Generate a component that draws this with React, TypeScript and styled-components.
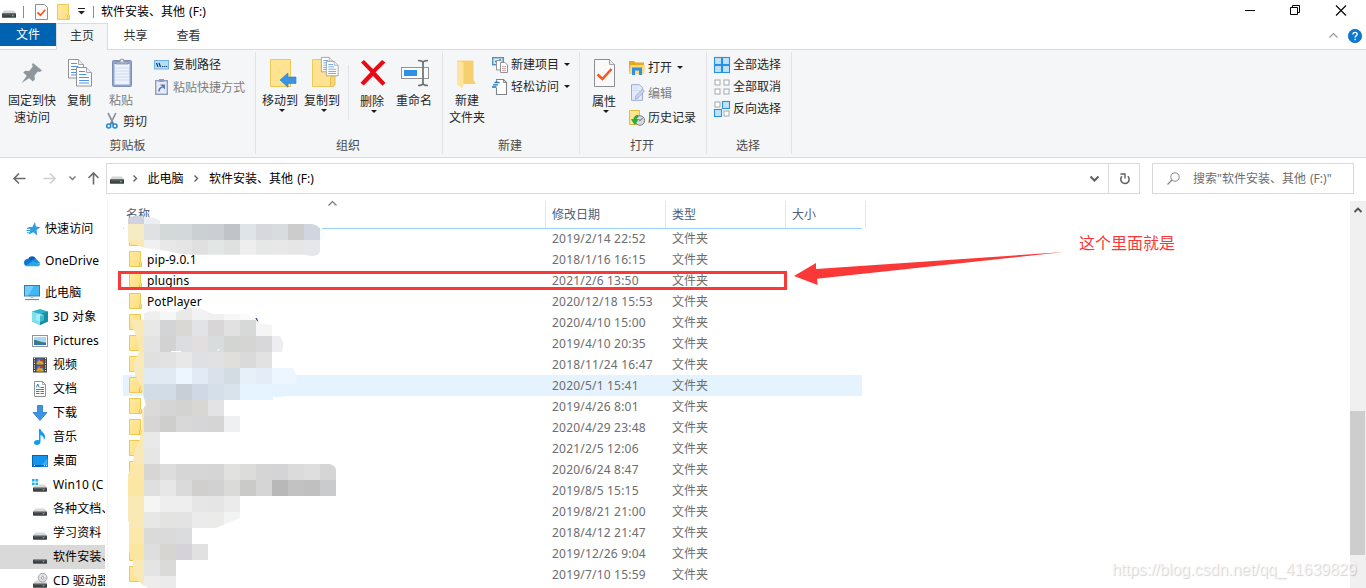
import React from 'react';
import styled, { createGlobalStyle } from 'styled-components';

const GlobalStyle = createGlobalStyle`
  * { box-sizing: border-box; }
  html, body { margin: 0; padding: 0; background: #fff; overflow: hidden; }
  body {
    font-family: "Noto Sans", "Noto Sans CJK SC", sans-serif;
    font-size: 12px;
    line-height: 17px;
    color: #000;
  }
  svg { display: block; flex: none; overflow: visible; }
`;

const Window = styled.div`
  position: relative;
  display: flex;
  flex-direction: column;
  width: 1366px;
  height: 588px;
  overflow: hidden;
  background: #fff;
`;

/* ---------- title bar ---------- */

const TitleBar = styled.header`
  display: flex;
  align-items: center;
  height: 23px;
  padding-left: 2px;
`;

const BarSeparator = styled.span<{ $left: number; $right: number }>`
  width: 1px;
  height: 12px;
  margin: 0 ${p => p.$right}px 0 ${p => p.$left}px;
  background: #8c8c8c;
`;

const IconSlot = styled.span<{ $gap: number }>`
  margin-right: ${p => p.$gap}px;
`;

const TitleText = styled.h1`
  flex: 1;
  margin: 0;
  font-size: 12px;
  font-weight: 400;
  line-height: 17px;
  word-spacing: 1px;
`;

const WindowControls = styled.div`
  display: flex;
  align-items: center;
  gap: 35px;
  padding: 0 20px 3px 0;
`;

/* ---------- tabs ---------- */

const TabRow = styled.nav`
  display: flex;
  height: 27px;
  margin-bottom: -1px;
  position: relative;
`;

const FileTab = styled.div`
  width: 56px;
  height: 23px;
  line-height: 23px;
  text-align: center;
  color: #fff;
  background: #0063b1;
`;

const Tab = styled.div<{ $active?: boolean }>`
  width: ${p => (p.$active ? 52 : 53)}px;
  height: 27px;
  padding-left: ${p => (p.$active ? 0 : 2)}px;
  line-height: 24px;
  text-align: center;
  color: #333;
  border: 1px solid ${p => (p.$active ? '#dadbdc' : 'transparent')};
  border-bottom: 0;
  background: ${p => (p.$active ? '#f5f6f7' : 'transparent')};
`;

const TabTools = styled.div`
  display: flex;
  align-items: center;
  gap: 10px;
  margin-left: auto;
  padding: 0 4px 1px 0;
`;

/* ---------- ribbon ---------- */

const Ribbon = styled.section`
  display: flex;
  height: 109px;
  border-top: 1px solid #dadbdc;
  border-bottom: 1px solid #dadbdc;
  background: #f5f6f7;
`;

const Group = styled.div<{ $width: number }>`
  display: flex;
  flex-direction: column;
  width: ${p => p.$width}px;
`;

const GroupBody = styled.div<{ $pad: number }>`
  display: flex;
  align-items: flex-start;
  height: 85px;
  padding-left: ${p => p.$pad}px;
`;

const GroupLabel = styled.div<{ $right?: number }>`
  padding-right: ${p => p.$right ?? 2}px;
  line-height: 21px;
  text-align: center;
  color: #4a4a4a;
`;

const GroupDivider = styled.div`
  width: 1px;
  margin: 2px 0 3px;
  background: #e2e3e4;
`;

const InnerDivider = styled.div`
  width: 1px;
  height: 55px;
  margin: 15px 2px 0 5px;
  background: #e2e3e4;
`;

const BigButton = styled.div<{ $width?: number; $left?: number; $muted?: boolean }>`
  display: flex;
  flex-direction: column;
  align-items: center;
  width: ${p => p.$width ?? 42}px;
  margin: 6px 0 0 ${p => p.$left ?? 0}px;
  color: ${p => (p.$muted ? '#7d7d7d' : '#262626')};
  white-space: nowrap;
  text-align: center;
`;

const BigLabel = styled.span<{ $top?: number }>`
  margin-top: ${p => p.$top ?? 4}px;
`;

const Stack = styled.div<{ $left?: number; $top?: number }>`
  display: flex;
  flex-direction: column;
  margin: ${p => p.$top ?? 4}px 0 0 ${p => p.$left ?? 0}px;
`;

const PasteColumn = styled.div`
  display: flex;
  flex-direction: column;
  width: 42px;
  margin-left: 9px;
`;

const SmallButton = styled.div<{ $muted?: boolean; $height?: number; $gap?: number }>`
  display: flex;
  align-items: center;
  gap: ${p => p.$gap ?? 3}px;
  height: ${p => p.$height ?? 22}px;
  white-space: nowrap;
  color: ${p => (p.$muted ? '#7d7d7d' : '#262626')};
`;

const SmallLabel = styled.span<{ $top?: number }>`
  margin-top: ${p => p.$top ?? -2}px;
`;

const CaretSlot = styled.span<{ $left?: number; $top?: number }>`
  margin: ${p => p.$top ?? 0}px 0 0 ${p => p.$left ?? 0}px;
`;

/* ---------- address row ---------- */

const AddressRow = styled.div`
  display: flex;
  align-items: flex-start;
  height: 43px;
  padding-top: 5px;
  word-spacing: 1px;
`;

const NavButtons = styled.div`
  display: flex;
  align-items: center;
  width: 106px;
  height: 31px;
  padding-left: 13px;
`;

const AddressBox = styled.div`
  display: flex;
  width: 1034px;
  height: 31px;
  border: 1px solid #d9d9d9;
`;

const Crumbs = styled.div`
  display: flex;
  align-items: center;
  flex: 1;
  padding: 0 0 1px 3px;
`;

const Crumb = styled.span<{ $left: number; $right: number }>`
  margin: 0 ${p => p.$right}px 0 ${p => p.$left}px;
`;

const CrumbToggle = styled.span`
  margin: 1px 9px 0 auto;
`;

const Refresh = styled.div`
  display: flex;
  align-items: center;
  justify-content: center;
  width: 31px;
  padding-left: 2px;
  border-left: 1px solid #d9d9d9;
`;

const SearchBox = styled.div`
  display: flex;
  align-items: center;
  gap: 13px;
  width: 202px;
  height: 31px;
  margin-left: 12px;
  padding: 0 0 1px 14px;
  border: 1px solid #d9d9d9;
  color: #6d6d6d;
  white-space: nowrap;
`;

/* ---------- body ---------- */

const Body = styled.main`
  display: flex;
  height: 387px;
`;

const Sidebar = styled.aside`
  width: 108px;
  height: 387px;
  padding-top: 16px;
  overflow: hidden;
  border-right: 1px solid #f2f2f2;
`;

const NavItem = styled.div<{ $level: number; $spaced?: boolean; $selected?: boolean }>`
  display: flex;
  align-items: center;
  gap: 5px;
  width: 105px;
  height: 24px;
  margin-bottom: ${p => (p.$spaced ? 8 : 0)}px;
  padding-left: ${p => (p.$level ? 32 : 24)}px;
  overflow: hidden;
  white-space: nowrap;
  background: ${p => (p.$selected ? '#d9d9d9' : 'transparent')};
`;

const NavLabel = styled.span`
  margin-top: -2px;
  letter-spacing: 0.1px;
`;

const FileList = styled.section`
  width: 1242px;
  padding-left: 15px;
`;

const columns = '423px 120px 120px 80px';

const HeaderRow = styled.div`
  position: relative;
  display: grid;
  grid-template-columns: ${columns};
  width: 743px;
  height: 27px;
  color: #4c607a;
`;

const HeaderCell = styled.div<{ $first?: boolean }>`
  position: relative;
  padding-left: ${p => (p.$first ? 3 : 6)}px;
  line-height: 27px;
  border-right: 1px solid #e5e5e5;
`;

const SortMark = styled.span`
  position: absolute;
  left: 205px;
  top: 0;
`;

const Rows = styled.div`
  width: 739px;
  box-shadow: inset 0 1px #99d1ff;
`;

const Row = styled.div<{ $hover?: boolean }>`
  display: grid;
  grid-template-columns: ${columns};
  align-items: center;
  height: 21px;
  background: ${p => (p.$hover ? '#e5f3ff' : 'transparent')};
  color: #6d6d6d;
`;

const NameCell = styled.div`
  display: flex;
  align-items: center;
  gap: 5px;
  height: 21px;
  padding: 0 0 1px 6px;
  color: #000;
`;

const NameText = styled.span<{ $indent?: number }>`
  margin-left: ${p => p.$indent ?? 0}px;
  letter-spacing: 0.1px;
`;

const DateCell = styled.div`
  padding-left: 6px;
  letter-spacing: 0.2px;
`;

const TypeCell = styled.div`
  padding-left: 6px;
`;

const ScrollTrack = styled.div`
  display: flex;
  flex-direction: column;
  align-items: center;
  width: 16px;
  padding: 7px 1px 0 0;
  background: #f0f0f0;
`;

const ScrollThumb = styled.div`
  width: 15px;
  height: 144px;
  margin-top: 198px;
  background: #cdcdcd;
`;

/* ---------- overlays ---------- */

const Overlay = styled.svg`
  position: absolute;
  left: 0;
  top: 0;
  pointer-events: none;
`;

const Frame = styled.div`
  position: absolute;
  left: 118px;
  top: 271px;
  width: 669px;
  height: 19px;
  border: 3px solid #fb3838;
`;

const Note = styled.div`
  position: absolute;
  left: 1079px;
  top: 232px;
  font-size: 16px;
  line-height: 23px;
  color: #fb3838;
  white-space: nowrap;
`;

const Watermark = styled.div`
  position: absolute;
  left: 1112px;
  top: 560px;
  font-family: "Liberation Sans", sans-serif;
  font-size: 16px;
  line-height: 20px;
  letter-spacing: -0.03px;
  color: rgba(250, 250, 250, 0.75);
  text-shadow: 1px 1px 1px rgba(0, 0, 0, 0.18);
  white-space: nowrap;
`;

/* ---------- icons ---------- */

const DownCaret = ({ shift = 0 }: { shift?: number }) => (
  <svg width="6" height="3" viewBox="0 0 6 3"><path d="M0 0h6L3 3z" transform={`translate(${shift} 0)`} fill="#1a1a1a" /></svg>
);

const Drive = () => (
  <svg width="14" height="8" viewBox="0 0 14 8">
    <path d="M2 0.5h10l2 3H0z" fill="#d4d6d8" />
    <rect y="3.3" width="14" height="4.5" rx="0.5" fill="#3d4144" />
    <rect x="1" y="4.2" width="12" height="1" fill="#5c6063" />
    <circle cx="10.8" cy="5.6" r="0.9" fill="#33e04b" />
  </svg>
);

const NavDrive = ({ badge }: { badge?: 'windows' | 'disc' }) => (
  <svg width="16" height="16" viewBox="0 0 16 16">
    {badge === 'windows' && (
      <g fill="#1fb4f0">
        <rect y="2" width="2.6" height="2.600" /><rect x="3.400" y="2" width="2.800" height="2.600" />
        <rect y="5.600" width="2.600" height="2.600" /><rect x="3.400" y="5.600" width="2.800" height="2.600" />
      </g>
    )}
    <path d={badge === 'windows' ? 'M7 7.600h5.600l2.400 3H1l1-1.500h5z' : 'M3.400 7.600h9.200l2.400 3H1z'} fill="#d6d8da" />
    <rect x="1" y="10.500" width="14" height="4.200" rx="0.400" fill="#3d4144" />
    <rect x="2" y="11.200" width="12" height="0.900" fill="#62666a" />
    <circle cx="11.400" cy="12.800" r="0.800" fill="#38e050" />
    {badge === 'disc' && (
      <g>
        <circle cx="10.600" cy="4.700" r="4.400" fill="#dcdfe1" stroke="#909599" strokeWidth="0.800" />
        <path d="M7.500 2.200l3 2.500 3.600-2" stroke="#fff" fill="none" />
        <circle cx="10.600" cy="4.700" r="1.300" fill="#fff" stroke="#7d8285" strokeWidth="0.700" />
      </g>
    )}
  </svg>
);

const Folder = () => (
  <svg width="13" height="16" viewBox="0 0 13 16">
    <defs>
      <linearGradient id="folderFill" x1="0" y1="0" x2="1" y2="1">
        <stop offset="0" stopColor="#ffeaa0" /><stop offset="1" stopColor="#ffdf80" />
      </linearGradient>
    </defs>
    <path d="M0.5 0.5h11v15H0.5z" fill="url(#folderFill)" stroke="#eec950" />
    <path d="M10.5 15.5v-4l1-1 1 1v4z" fill="#ffe07e" stroke="#e2bb3e" strokeWidth="0.8" />
  </svg>
);

const CheckedPage = ({ big }: { big?: boolean }) => big ? (
  <svg width="32" height="32" viewBox="0 0 32 32">
    <path d="M6.5 3.5h15l5 5v22h-20z" fill="#fafafa" stroke="#8b8f93" />
    <path d="M21.5 3.5v5h5" fill="#e9eaeb" stroke="#8b8f93" strokeWidth="0.8" />
    <path d="M9.5 18.500l5 4.500 9-10" fill="none" stroke="#f4591d" strokeWidth="2.6" />
  </svg>
) : (
  <svg width="13" height="16" viewBox="0 0 13 16">
    <path d="M0.5 0.5h9l3 3v12h-12z" fill="#fafafa" stroke="#8b8f93" />
    <path d="M2.5 8.5l3 2.7 4.8-5.4" fill="none" stroke="#f4591d" strokeWidth="1.7" />
  </svg>
);

const Pin = () => (
  <svg width="32" height="32" viewBox="0 0 32 32">
    <g fill="#8e979d">
      <path d="M17 7l9 7.5-2.2 1.4-2-.5-3.200 4 .2 4-2 2-9.600-9 2-1.600 4 .2 3.600-4.400-.8-2z" />
      <path d="M11.600 18.600l3 2.600L5.600 27z" />
    </g>
  </svg>
);

const PageLines = ({ x, y, scale = 1 }: { x: number; y: number; scale?: number }) => (
  <g transform={`translate(${x} ${y}) scale(${scale})`}>
    <path d="M0.5 0.5h10l5 5v13.500h-15z" fill="#fff" stroke="#8f9498" />
    <path d="M10.500 0.500v5h5" fill="#eceff2" stroke="#8f9498" strokeWidth="0.8" />
    <path d="M3 4.500h6M3 7.500h7.500M3 10.500h10M3 13.500h10M3 16h10" stroke="#4f93e6" />
  </g>
);

const CopyPages = () => (
  <svg width="32" height="32" viewBox="0 0 32 32">
    <PageLines x={5} y={3} /><PageLines x={13} y={11} />
  </svg>
);

const Clipboard = () => (
  <svg width="32" height="32" viewBox="0 0 32 32">
    <rect x="7.500" y="4.500" width="19" height="26" rx="1" fill="#8fa3cb" stroke="#7d90ba" />
    <rect x="9.500" y="8" width="15" height="20.500" fill="#eef3fb" />
    <path d="M10 12h14M10 15h14M10 18h14M10 21h14M10 24h14" stroke="#cfdaee" />
    <path d="M11 8V5.500h3.500a2.500 2.500 0 0 1 5 0H23V8z" fill="#a9b2c2" stroke="#808ba1" strokeWidth="0.7" />
    <circle cx="17" cy="4.800" r="1" fill="#fff" />
  </svg>
);

const Scissors = () => (
  <svg width="12" height="18" viewBox="0 0 12 18">
    <path d="M2 1l5.500 11M9.800 1L4.500 12" stroke="#8b949a" strokeWidth="1.700" fill="none" />
    <circle cx="2.700" cy="14" r="2" fill="none" stroke="#2689d0" strokeWidth="1.600" />
    <circle cx="9" cy="14" r="2" fill="none" stroke="#2689d0" strokeWidth="1.600" />
    <path d="M4.300 12.500L6 10.500l1.600 2" stroke="#2689d0" strokeWidth="1.400" fill="none" />
  </svg>
);

const PathIcon = () => (
  <svg width="16" height="10" viewBox="0 0 16 10">
    <rect x="0.500" y="0.500" width="14" height="8.500" fill="#b5dcf8" stroke="#71b2e6" />
    <path d="M2.500 3l1.500 4M5 3l1.500 4" stroke="#143a66" strokeWidth="1.200" />
    <path d="M8 6.500h1.200M10 6.500h1.200M12 6.500h1.200" stroke="#143a66" strokeWidth="1.200" />
  </svg>
);

const ShortcutIcon = () => (
  <svg width="16" height="16" viewBox="0 0 16 16">
    <rect x="1.700" y="1.700" width="11.600" height="13.600" fill="#e7ebf7" stroke="#8f9dc0" strokeWidth="1.400" />
    <rect x="5" y="0" width="5" height="3" fill="#8f9dc0" />
    <path d="M5 12.500c0-3 1-4 3.500-4.500" stroke="#5f77b0" strokeWidth="1.600" fill="none" />
    <path d="M6 5.500h5v5z" fill="#5f77b0" />
  </svg>
);

const BigFolderBase = ({ w = 21 }: { w?: number }) => (
  <path d={`M6.500 3.500h${w - 1}v27h-${w - 1}z`} fill="#ffe391" stroke="#edc95a" />
);

const MoveTo = () => (
  <svg width="32" height="32" viewBox="0 0 32 32">
    <BigFolderBase />
    <path d="M16 24l8-7v4h8v6.500h-8v3.800z" fill="#3a93e3" stroke="#2a7fcc" strokeWidth="0.600" />
  </svg>
);

const CopyTo = () => (
  <svg width="32" height="32" viewBox="0 0 32 32">
    <BigFolderBase w={20} />
    <path d="M24.500 30.500v-9l2-2h2.500v9l-1.500 2z" fill="#f9d672" stroke="#e3bd4b" strokeWidth="0.900" />
    <PageLines x={15} y={1} scale={0.78} /><PageLines x={20} y={5} scale={0.78} />
  </svg>
);

const DeleteCross = () => (
  <svg width="32" height="32" viewBox="0 0 32 32">
    <path d="M5 6.500L8 4 17 12.900 26 4 29.500 6.500 19.600 16.300 29.500 27l-3 2.800L17 20 7.800 29.500 4.500 26.800 14.400 16.300z" fill="#e60b14" />
  </svg>
);

const Rename = () => (
  <svg width="32" height="32" viewBox="0 0 32 32">
    <rect x="3.500" y="11.500" width="27" height="11" fill="#fdfdfd" stroke="#8f9498" />
    <rect x="6" y="14" width="13" height="6" fill="#2f91e5" />
    <path d="M20 4.500c3 0 5 .5 5 2.500v20c0 2-2 2.500-5 2.500M30 4.500c-3 0-5 .5-5 2.500v20c0 2 2 2.500 5 2.500" fill="none" stroke="#6b6f73" strokeWidth="1.700" />
  </svg>
);

const NewFolder = () => (
  <svg width="32" height="32" viewBox="0 0 32 32">
    <path d="M10 5h12.500v19l2.500 4H10z" fill="#f6d06e" />
    <path d="M6 5h4l2.500 2.500V27l-1.500 5L6 28.500z" fill="#fde5a0" />
    <path d="M6 5h16.500" stroke="#f2cd6c" strokeWidth="0.800" />
    <path d="M11 31.500l1.500-4V8" fill="none" stroke="#f6d985" strokeWidth="0.700" />
  </svg>
);

const NewItem = () => (
  <svg width="16" height="16" viewBox="0 0 16 16">
    <rect x="0.700" y="0.700" width="10.600" height="7" fill="#d6ecfb" stroke="#4f93c0" strokeWidth="1.400" />
    <path d="M3 4.500h2M7 3h2" stroke="#3a7cab" strokeWidth="1.500" />
    <path d="M4.500 3.500h4.500l2.500 2.500v7h-7z" fill="#fff" stroke="#8f9498" />
    <path d="M8.500 5.500h4.500l2.500 2.500v7.500h-7z" fill="#fff" stroke="#8f9498" />
    <path d="M10 9.500h4M10 11.500h4M10 13.500h4" stroke="#e79a9a" strokeWidth="0.900" />
  </svg>
);

const EasyAccess = () => (
  <svg width="16" height="16" viewBox="0 0 16 16">
    <path d="M4.500 3V0.500h7l3 3v12h-10V9" fill="#fff" stroke="#7f8488" strokeWidth="1.100" />
    <path d="M11.500 0.500v3h3" fill="none" stroke="#7f8488" strokeWidth="0.900" />
    <path d="M2.500 3.500h5M1 5.800h5M0 8h4.500" stroke="#2377bd" strokeWidth="1.300" />
  </svg>
);

const OpenFolder = () => (
  <svg width="16" height="16" viewBox="0 0 16 16">
    <path d="M0 1h5l1.500 1.500H15V14H0z" fill="#e7a91c" />
    <path d="M0 14L1.500 5H16l-1 9z" fill="#ffd978" />
    <path d="M3 15V7.500h10V15h-3v-4.500H6V15z" fill="#2f8fe0" />
  </svg>
);

const EditPage = () => (
  <svg width="16" height="17" viewBox="0 0 16 17">
    <path d="M2.500 0.700h8l3 3v12.600h-11z" fill="#e3ebf9" stroke="#98acd2" />
    <path d="M4 4h5M4 6.500h7" stroke="#ccd8ef" strokeWidth="0.900" />
    <path d="M6 15l1-3.200L13.500 5l2 2-6.500 7z" fill="#c6d4ee" stroke="#8ba3cf" strokeWidth="0.700" />
  </svg>
);

const History = () => (
  <svg width="16" height="16" viewBox="0 0 16 16">
    <path d="M0.500 0.500h10v14h-10z" fill="#ffe58c" stroke="#e2bb43" />
    <circle cx="10.800" cy="10.500" r="4.800" fill="#d7dadc" stroke="#7b8084" />
    <path d="M9.500 9l1.300 1.700 2.800-2.500" stroke="#555" fill="none" strokeWidth="0.900" />
    <path d="M9 5.300c-2.500-.1-4 1.600-4.200 4.200H2.500l3.300 5 3.200-5H7.200c0-1.500.5-2.300 1.800-2.300z" fill="#27b43a" stroke="#128023" strokeWidth="0.500" />
  </svg>
);

const Tiles = ({ on }: { on: boolean[] }) => (
  <svg width="16" height="16" viewBox="0 0 16 16">
    {on.map((active, i) => {
      const step = active ? 8 : 9;
      const pad = active ? 0.5 : 1;
      const size = active ? 7 : 5;
      return (
        <rect key={i} x={(i % 2) * step + pad} y={Math.floor(i / 2) * step + pad}
          width={size} height={size}
          fill={active ? '#bfe2fa' : '#fff'} stroke={active ? '#2c92df' : '#a3a6a9'} strokeWidth={active ? 1.1 : 1} />
      );
    })}
  </svg>
);

const Star = () => (
  <svg width="16" height="16" viewBox="0 0 16 16">
    <path d="M10.500 1l.9 4.500 4.600.8-4 2.600.8 5.600-4-3.200-4.800 2.200 2-4.500L3.500 6h4.300z" transform="translate(0.500 0)" fill="#2f9de4" />
    <path d="M3 7.300h3M2.500 9.500h4M3 11.800h2.500" stroke="#2f9de4" strokeWidth="1" />
  </svg>
);

const OneDriveIcon = () => (
  <svg width="16" height="16" viewBox="0 0 16 16">
    <path d="M4 6.200a4.200 4.200 0 0 1 7.800-.4L8 10z" fill="#0a5cb4" />
    <path d="M3.500 5.800C1.500 6 0 7.600 0 9.700S1.600 13.300 3.500 13.300L11 9z" fill="#1173d2" />
    <path d="M11 5.800a3.600 3.600 0 0 1 3.300 2.400C15.500 8.700 16 9.600 16 10.800L9 9.500 7 7.600z" fill="#1490df" />
    <path d="M1.500 12.800L8.300 8.600 16 11c-.1 1.400-1.200 2.300-2.600 2.300H3.500c-.8 0-1.400-.1-2-.5z" fill="#28a8ea" />
  </svg>
);

const Computer = () => (
  <svg width="16" height="16" viewBox="0 0 16 16">
    <rect x="0.500" y="0.500" width="15" height="10.500" fill="#41b8f5" stroke="#3a7aa6" />
    <path d="M1 1h9L4 10.500H1z" fill="#74cdf9" />
    <path d="M6.500 11.500h3v1.500h-3z" fill="#b8c0c6" />
    <path d="M1 14.500h14" stroke="#7d8b95" strokeWidth="1.200" />
  </svg>
);

const Cube = () => (
  <svg width="16" height="16" viewBox="0 0 16 16">
    <path d="M0 2.500L8 0l8 2.500v10L8 16l-8-3.500z" fill="#2bb3cb" />
    <path d="M0 2.500L8 5v11l-8-3.500z" fill="#7fe0ec" />
    <path d="M8 5l8-2.500v10L8 16z" fill="#148fa8" />
    <path d="M4 6l4-1.500L12 6v5l-4 1.800L4 11z" fill="#b9f1f7" opacity="0.700" />
    <path d="M8 7.500L12 6v5l-4 1.800z" fill="#35bccf" />
  </svg>
);

const Picture = () => (
  <svg width="16" height="16" viewBox="0 0 16 16">
    <rect x="0.500" y="2.500" width="15" height="11" fill="#fff" stroke="#8f9498" />
    <rect x="2" y="4" width="12" height="8" fill="#a7d9f3" />
    <path d="M2 7c4 0 5 2 12 2.500V12H2z" fill="#3d7c80" />
    <path d="M2 10.500h12V12H2z" fill="#2f78bd" />
  </svg>
);

const Film = () => (
  <svg width="16" height="16" viewBox="0 0 16 16">
    <rect x="1" y="0.500" width="14" height="15" fill="#3a3a3e" />
    <path d="M2.500 1v14M13.500 1v14" stroke="#e4e4e4" strokeWidth="1.300" strokeDasharray="1.200 1.200" />
    <rect x="4.500" y="1.500" width="7" height="6" fill="#4d6fd0" /><rect x="4.500" y="8.500" width="7" height="6" fill="#4d6fd0" />
    <path d="M4.500 5.500l3-2.500 4 2.500v2h-7zM4.500 12.500l3-2.500 4 2.500v2h-7z" fill="#d9a02c" />
    <path d="M8 2h3v2H8zM8 9h3v2H8z" fill="#a6442f" />
  </svg>
);

const Doc = () => (
  <svg width="16" height="16" viewBox="0 0 16 16">
    <path d="M2.500 0.500h8l3 3v12h-11z" fill="#fff" stroke="#8f9498" />
    <path d="M10.500 0.500v3h3" fill="none" stroke="#8f9498" strokeWidth="0.800" />
    <path d="M4.300 6.500l1.500-3.500 1.500 3.500M8.500 6.500h3.500M4 8.500h8M4 10.500h3.500M8.500 10.500h3.500M4 12.500h3.500M8.500 12.500h3.500" fill="none" stroke="#2d83bd" strokeWidth="1" />
  </svg>
);

const Download = () => (
  <svg width="16" height="16" viewBox="0 0 16 16">
    <path d="M5.500 0.500h5v7H15L8 15.500 1 7.500h4.500z" fill="#3b95e4" stroke="#2b78c2" strokeWidth="0.800" />
  </svg>
);

const MusicNote = () => (
  <svg width="16" height="16" viewBox="0 0 16 16">
    <path d="M7 0h1.500c.3 3 5 4 4.500 8.500-.2 1.300-.8 2-1.300 2.300C12 7.500 10 6.800 8.500 6v6.500c0 2-1.600 3.500-3.600 3.500S2 15 2 13.500 3.600 11 5.500 11c.6 0 1.100.1 1.500.3z" fill="#109cf4" />
  </svg>
);

const Desktop = () => (
  <svg width="16" height="16" viewBox="0 0 16 16">
    <rect x="0.500" y="2.500" width="15" height="11" fill="#1295ee" stroke="#0b62a8" />
    <path d="M9 13.500L15.500 5v8.500z" fill="#3cb0fa" />
    <path d="M1 12.500h14" stroke="#0b5c9e" /><path d="M2 12.500h1M12 12.500h1M14 12.500h1" stroke="#fff" />
  </svg>
);

const Chevron = ({ dir, size = 7, color = '#5f5f5f', width = 1.4 }: { dir: 'up' | 'down' | 'right'; size?: number; color?: string; width?: number }) => {
  const h = size / 2;
  const d = dir === 'up' ? `M0.500 ${h}L${h} 0.500 ${size - 0.5} ${h}` : dir === 'down' ? `M0.500 0.500L${h} ${h} ${size - 0.5} 0.500` : `M0.500 0.500L${h} ${h} 0.500 ${size - 0.5}`;
  return (
    <svg width={dir === 'right' ? h + 1 : size} height={dir === 'right' ? size : h + 1}>
      <path d={d} fill="none" stroke={color} strokeWidth={width} />
    </svg>
  );
};

const Arrow = ({ rotate = 0, color = '#6b6b6b' }: { rotate?: number; color?: string }) => (
  <svg width="13" height="13" viewBox="0 0 13 13">
    <path d="M12.500 6.500H1M6 1.500L1 6.500l5 5" transform={`rotate(${rotate} 6.500 6.500)`} fill="none" stroke={color} strokeWidth="1.600" />
  </svg>
);

/* ---------- blurred-out names ---------- */

const mosaic: { y: number; x: number; cells: string }[] = [
  { y: 208, x: 128, cells: 'd0d3de ebeff3' },
  { y: 224, x: 128, cells: 'f5ebc4 dfe1e3 d3d8d8 d3d8da cbd0d3 cbcfd3 c0c4c8 dfe4e8 d6d8dd d8dcdf cccccd d0d5df f9fcff' },
  { y: 240, x: 128, cells: 'fae9b3 f0f0f0 e8e8e8 e5e5e5 e0e0e1 e2e6e5 dee1df eeeeee e6e7e7 e8e8e8 e6e6e6 e5e7ea' },
  { y: 304, x: 144, cells: 'efefef f5f7f6 e9e9e8 f2f2f2 f0f0f0 f6f7f6 f9fafa' },
  { y: 320, x: 128, cells: 'f9e9b5 e8e8e7 d3d4d5 d9d8d5 e2e3e6 d8d6d7 e1e1e1 d7d9d8 f5f5f5' },
  { y: 336, x: 128, cells: 'f9e7b1 e4e3e4 d2d2d2 dcdde0 e2dedf d9dcdd d3d5d3 d5d5d4 d8d7d9 ededf2' },
  { y: 352, x: 128, cells: 'f9eaba e1e0e1 e3e2e3 e8e8e8 dfe0e4 e1e1e3 e0dfdc dadada e2e2e2' },
  { y: 368, x: 128, cells: 'f7e9bc e1e9f2 e1e9f2 edf6ff e1eaf5 dae1ea d3dbe3 e7f0f8 e4edf7 edf6ff edf6ff' },
  { y: 384, x: 128, cells: 'f7e6b0 d1dce6 d1dce6 c8cfd7 d0d8e6 d5dfe9 d8e3eb e5f4ff e5f4ff e5f3ff' },
  { y: 400, x: 128, cells: 'fbe8b0 dbdad9 d6d5d5 d3d3d1 d8d7d4 e3e3e5' },
  { y: 416, x: 128, cells: 'fbe8b0 d7d6d5 cecfcc d8d8d9 d6d5d7 d6d5d6 eff0f1' },
  { y: 432, x: 128, cells: 'f9e9b8 e9e9e9 fdfffe' },
  { y: 448, x: 128, cells: 'f9e9b8 e6e6e5 fdfffe' },
  { y: 464, x: 128, cells: 'fce7a6 d7d6d4 dcdddc d6d6d6 d6d6d6 d5d5d6 e1e1df dcdddb d5d5d5 d4d4d6 dcdbdc dedede d5d5d5' },
  { y: 480, x: 128, cells: 'fbe6a3 dfdfdf e6e7e6 dadadb d0cfcd d1d1d1 dadad9 cacbc8 d5d5d5 b8b8b8 c2c2c2 c0c0c0 cacbcd' },
  { y: 496, x: 128, cells: 'f9e9b5 f5f5f5 eeeeee eeeeee e6e6e6 e5e5e5 ebebeb' },
  { y: 512, x: 128, cells: 'f9e9b5 e7e7e7 e3e3e2 e3e3e3 ebebeb ebebea f2f3f3' },
  { y: 528, x: 128, cells: 'fbe8aa dadada dadada dbdcde' },
  { y: 544, x: 128, cells: 'fbe6a0 dedede d6d5d2 d5d3d9 e1e1e1' },
  { y: 560, x: 128, cells: 'f9e9b5 e4e4e5 dadad9' },
  { y: 576, x: 128, cells: 'f8e8b8 efedec ebebeb' },
];

const Mosaic = () => (
  <Overlay width="1366" height="588" viewBox="0 0 1366 588">
    <defs>
      <clipPath id="brushTop">
        <path d="M128 219Q133 214 143 216.500L146 217Q156 217 160 221V224H312Q318 225 320 229L326 233Q325 239 320 240V252Q318 256 312 256L304 254.700H190L175 253 168 251 160 250 145 248 136 245 128 241.500z" />
      </clipPath>
      <clipPath id="brushBottom">
        <path d="M144 313L152 311 176 312 188 308Q197 306 204 310L212 314 245 314Q254 316 256 320L260 323 272 325V336H280Q285 343 282 352H272V368H293Q299 377 295 386 291 394 283 397L273 397V400H224V416H240V432H160V464H330Q336 466 336 470V496H240V518L216 528H192V544H208V560H176V588H148Q135 581 133 572V560L129 552V523L128 520V475L133 462 134 452 139 442 142 430V410L146 405 140 385 134 372V362L139 352 137 338 132 326V321L137 317z" />
      </clipPath>
    </defs>
    <path d="M124 225h5v7h-5zM320 226h2v6h-2z" fill="#fff" />
    {mosaic.map(row => (
      <g key={row.y} clipPath={row.y < 300 ? 'url(#brushTop)' : 'url(#brushBottom)'} shapeRendering="crispEdges">
        {row.cells.split(' ').map((c, i) => (
          <rect key={i} x={row.x + i * 16} y={row.y} width="16" height="16" fill={`#${c}`} />
        ))}
      </g>
    ))}
    <path d="M171 351.500h10M218 351v-1.500h1.500" stroke="#fff" fill="none" />
  </Overlay>
);

/* ---------- data ---------- */

const files: { name?: string; date: string; hover?: boolean; indent?: number }[] = [
  { date: '2019/2/14 22:52' },
  { name: 'pip-9.0.1', date: '2018/1/16 16:15' },
  { name: 'plugins', date: '2021/2/6 13:50' },
  { name: 'PotPlayer', date: '2020/12/18 15:53' },
  { name: ')', date: '2020/4/10 15:00', indent: 108 },
  { date: '2019/4/10 20:35' },
  { date: '2018/11/24 16:47' },
  { date: '2020/5/1 15:41', hover: true },
  { date: '2019/4/26 8:01' },
  { date: '2020/4/29 23:48' },
  { date: '2021/2/5 12:06' },
  { date: '2020/6/24 8:47' },
  { date: '2019/8/5 15:15' },
  { date: '2019/8/21 21:00' },
  { date: '2018/4/12 21:47' },
  { date: '2019/12/26 9:04' },
  { date: '2019/7/10 15:59' },
];

const places: { label: string; icon: React.ReactNode; level: number; spaced?: boolean; selected?: boolean }[] = [
  { label: '快速访问', icon: <Star />, level: 0, spaced: true },
  { label: 'OneDrive', icon: <OneDriveIcon />, level: 0, spaced: true },
  { label: '此电脑', icon: <Computer />, level: 0 },
  { label: '3D 对象', icon: <Cube />, level: 1 },
  { label: 'Pictures', icon: <Picture />, level: 1 },
  { label: '视频', icon: <Film />, level: 1 },
  { label: '文档', icon: <Doc />, level: 1 },
  { label: '下载', icon: <Download />, level: 1 },
  { label: '音乐', icon: <MusicNote />, level: 1 },
  { label: '桌面', icon: <Desktop />, level: 1 },
  { label: 'Win10 (C', icon: <NavDrive badge="windows" />, level: 1 },
  { label: '各种文档、', icon: <NavDrive />, level: 1 },
  { label: '学习资料', icon: <NavDrive />, level: 1 },
  { label: '软件安装、', icon: <NavDrive />, level: 1, selected: true },
  { label: 'CD 驱动器', icon: <NavDrive badge="disc" />, level: 1 },
];

export default function App() {
  return (
    <Window>
      <GlobalStyle />
      <TitleBar>
        <CaretSlot $top={4}><Drive /></CaretSlot>
        <BarSeparator $left={7} $right={11} />
        <IconSlot $gap={9}><CheckedPage /></IconSlot>
        <IconSlot $gap={8}><Folder /></IconSlot>
        <svg width="7" height="7" viewBox="0 0 7 7"><path d="M0 0.500h7" stroke="#222" /><path d="M0 3h7L3.500 6.500z" fill="#222" /></svg>
        <BarSeparator $left={8} $right={7} />
        <TitleText>软件安装、其他 (F:)</TitleText>
        <WindowControls>
          <svg width="10" height="10"><path d="M0 5.500h10" stroke="#000" /></svg>
          <svg width="10" height="10"><path d="M0.500 2.500h7v7h-7zM2.500 2.500v-2h7v7h-2" fill="none" stroke="#000" /></svg>
          <svg width="11" height="11"><path d="M1 0.500l10 10M11 0.500l-10 10" stroke="#000" strokeWidth="1.100" /></svg>
        </WindowControls>
      </TitleBar>
      <TabRow>
        <FileTab>文件</FileTab>
        <Tab $active>主页</Tab>
        <Tab>共享</Tab>
        <Tab>查看</Tab>
        <TabTools>
          <Chevron dir="up" size={9} color="#9a9a9a" width={1.2} />
          <svg width="14" height="14" viewBox="0 0 14 14">
            <circle cx="7" cy="7" r="6.700" fill="#0b79d4" stroke="#06569c" strokeWidth="0.600" />
            <path d="M4.900 5.400c0-2.800 4.300-2.600 4.300-.1C9.200 6.900 7.100 6.800 7.100 8.500M7.100 9.700v1.500" fill="none" stroke="#fff" strokeWidth="1.400" />
          </svg>
        </TabTools>
      </TabRow>
      <Ribbon>
        <Group $width={255}>
          <GroupBody $pad={8}>
            <BigButton $width={48}><Pin /><BigLabel>固定到快<br />速访问</BigLabel></BigButton>
            <BigButton $width={36} $left={5}><CopyPages /><BigLabel>复制</BigLabel></BigButton>
            <PasteColumn>
              <BigButton $width={30} $muted><Clipboard /><BigLabel>粘贴</BigLabel></BigButton>
              <SmallButton $gap={5} $height={23}><Scissors /><SmallLabel $top={1}>剪切</SmallLabel></SmallButton>
            </PasteColumn>
            <Stack $left={6}>
              <SmallButton><PathIcon /><SmallLabel>复制路径</SmallLabel></SmallButton>
              <SmallButton $muted><ShortcutIcon /><SmallLabel $top={0}>粘贴快捷方式</SmallLabel></SmallButton>
            </Stack>
          </GroupBody>
          <GroupLabel $right={0}>剪贴板</GroupLabel>
        </Group>
        <GroupDivider />
        <Group $width={186}>
          <GroupBody $pad={3}>
            <BigButton><MoveTo /><BigLabel>移动到</BigLabel><DownCaret shift={2} /></BigButton>
            <BigButton><CopyTo /><BigLabel>复制到</BigLabel><DownCaret shift={2} /></BigButton>
            <InnerDivider />
            <BigButton><DeleteCross /><BigLabel $top={5}>删除</BigLabel><DownCaret shift={2} /></BigButton>
            <BigButton><Rename /><BigLabel>重命名</BigLabel></BigButton>
          </GroupBody>
          <GroupLabel>组织</GroupLabel>
        </Group>
        <GroupDivider />
        <Group $width={136}>
          <GroupBody $pad={3}>
            <BigButton><NewFolder /><BigLabel>新建<br />文件夹</BigLabel></BigButton>
            <Stack $left={4}>
              <SmallButton><NewItem /><SmallLabel>新建项目</SmallLabel><CaretSlot $left={2} $top={-2}><DownCaret /></CaretSlot></SmallButton>
              <SmallButton><EasyAccess /><SmallLabel>轻松访问</SmallLabel><CaretSlot $left={2} $top={-2}><DownCaret /></CaretSlot></SmallButton>
            </Stack>
          </GroupBody>
          <GroupLabel>新建</GroupLabel>
        </Group>
        <GroupDivider />
        <Group $width={126}>
          <GroupBody $pad={3}>
            <BigButton><CheckedPage big /><BigLabel $top={5}>属性</BigLabel><DownCaret shift={2} /></BigButton>
            <Stack $left={4} $top={5}>
              <SmallButton $height={25}><OpenFolder />打开<CaretSlot $left={2}><DownCaret /></CaretSlot></SmallButton>
              <SmallButton $height={25} $muted><EditPage /><SmallLabel $top={1}>编辑</SmallLabel></SmallButton>
              <SmallButton $height={25}><History />历史记录</SmallButton>
            </Stack>
          </GroupBody>
          <GroupLabel>打开</GroupLabel>
        </Group>
        <GroupDivider />
        <Group $width={84}>
          <GroupBody $pad={7}>
            <Stack>
              <SmallButton><Tiles on={[true, true, true, true]} /><SmallLabel>全部选择</SmallLabel></SmallButton>
              <SmallButton><Tiles on={[false, false, false, false]} /><SmallLabel>全部取消</SmallLabel></SmallButton>
              <SmallButton><Tiles on={[false, true, true, false]} /><SmallLabel>反向选择</SmallLabel></SmallButton>
            </Stack>
          </GroupBody>
          <GroupLabel>选择</GroupLabel>
        </Group>
        <GroupDivider />
      </Ribbon>
      <AddressRow>
        <NavButtons>
          <IconSlot $gap={17}><Arrow /></IconSlot>
          <IconSlot $gap={13}><Arrow rotate={180} color="#cfcfcf" /></IconSlot>
          <IconSlot $gap={11}><Chevron dir="down" size={7} color="#777" /></IconSlot>
          <Arrow rotate={90} />
        </NavButtons>
        <AddressBox>
          <Crumbs>
            <CaretSlot $top={4}><Drive /></CaretSlot>
            <Crumb $left={9} $right={10}><Chevron dir="right" /></Crumb>
            此电脑
            <Crumb $left={10} $right={11}><Chevron dir="right" /></Crumb>
            软件安装、其他 (F:)
            <CrumbToggle><Chevron dir="down" size={9} width={2} /></CrumbToggle>
          </Crumbs>
          <Refresh>
            <svg width="12" height="12" viewBox="0 0 12 12">
              <path d="M8.800 3.200A4.200 4.200 0 1 1 3 3.300" fill="none" stroke="#5f5f5f" strokeWidth="1.500" />
              <path d="M1.500 1H6v4.500" fill="none" stroke="#5f5f5f" strokeWidth="1.400" />
            </svg>
          </Refresh>
        </AddressBox>
        <SearchBox>
          <svg width="13" height="13" viewBox="0 0 13 13">
            <circle cx="8" cy="5" r="4.200" fill="none" stroke="#888" />
            <path d="M5 8L0.500 12.500" stroke="#888" strokeWidth="1.200" />
          </svg>
          搜索"软件安装、其他 (F:)"
        </SearchBox>
      </AddressRow>
      <Body>
        <Sidebar>
          {places.map(p => (
            <NavItem key={p.label} $level={p.level} $spaced={p.spaced} $selected={p.selected}>{p.icon}<NavLabel>{p.label}</NavLabel></NavItem>
          ))}
        </Sidebar>
        <FileList>
          <HeaderRow>
            <HeaderCell $first>名称<SortMark><Chevron dir="up" size={9} color="#777" width={1.2} /></SortMark></HeaderCell>
            <HeaderCell>修改日期</HeaderCell>
            <HeaderCell>类型</HeaderCell>
            <HeaderCell>大小</HeaderCell>
          </HeaderRow>
          <Rows>
            {files.map((f, i) => (
              <Row key={i} $hover={f.hover}>
                <NameCell><Folder /><NameText $indent={f.indent}>{f.name}</NameText></NameCell>
                <DateCell>{f.date}</DateCell>
                <TypeCell>文件夹</TypeCell>
              </Row>
            ))}
          </Rows>
        </FileList>
        <ScrollTrack>
          <Chevron dir="up" size={8} color="#505050" width={1.8} />
          <ScrollThumb />
        </ScrollTrack>
      </Body>
      <Mosaic />
      <Frame />
      <Overlay width="1366" height="588" viewBox="0 0 1366 588">
        <path d="M794 276l22-13v6l248-17-247 26.800.700 6.200z" fill="#fb3838" />
      </Overlay>
      <Note>这个里面就是</Note>
      <Watermark>https://blog.csdn.net/qq_41639829</Watermark>
    </Window>
  );
}
